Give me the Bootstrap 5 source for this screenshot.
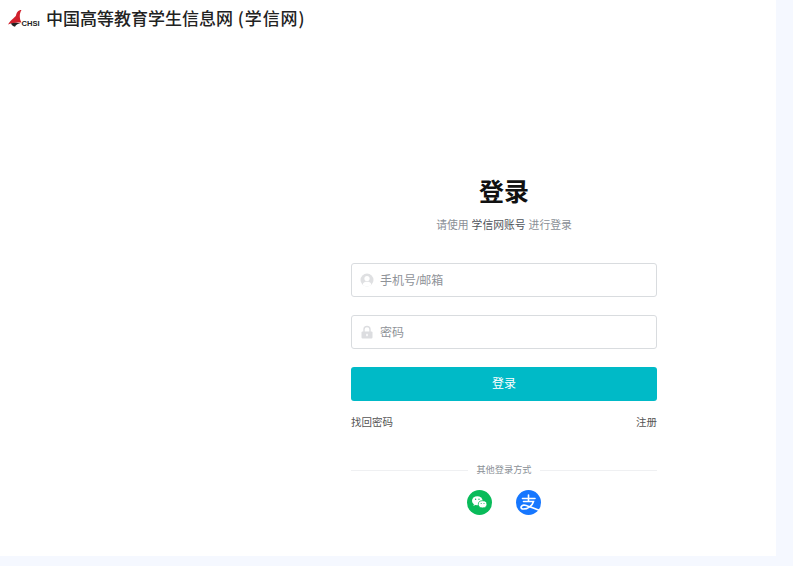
<!DOCTYPE html>
<html lang="zh">
<head>
<meta charset="utf-8">
<title>登录</title>
<link href="https://cdn.jsdelivr.net/npm/bootstrap@5.3.0/dist/css/bootstrap.min.css" rel="stylesheet">
<style>
html,body{height:566px;overflow:hidden}
body{background:#f5f8ff;font-family:"Liberation Sans","Noto Sans CJK SC",sans-serif;color:#333}
.sheet{width:776px;height:556px;background:#fff}
.brand{height:40px;padding:5px 0 0 8px;gap:6px}
.brand-name{font-family:"Noto Sans CJK SC",sans-serif;font-weight:500;font-size:17px;line-height:26px;color:#222;white-space:pre}
.brand-alt{letter-spacing:.9px;margin-left:1px}
.login-box{width:306px;margin:0 0 0 351px;padding-top:135px}
.login-title{font-size:25px;font-weight:700;line-height:34px;color:#111;margin:0}
.login-sub{font-size:10.8px;line-height:16px;color:#8a8f96;margin:8px 0 30px}
.login-sub b{font-weight:400;color:#50555c}
.field{height:34px;border:1px solid #d9dcdf;border-radius:3px;margin-bottom:18px;padding-left:8px;gap:6px}
.field input{border:0;outline:0;padding:1px 0 0;flex:1;min-width:0;font-size:12px;color:#333;background:transparent}
.field input::placeholder{color:#8f9399;opacity:1}
.go-btn{height:34px;background:#00bac7;border:0;border-radius:3px;color:#fff;font-size:12px;padding:0}
.go-btn:hover{background:#00bac7;color:#fff}
.aux{font-size:10.5px;line-height:16px;margin-top:13px}
.aux a{color:#555;text-decoration:none}
.rule-row{margin-top:33px;gap:8px;font-size:9.2px;line-height:14px;color:#8a8f96}
.rule-row i{flex:1;height:1px;background:#eff0f2}
.socials{gap:24px;margin-top:13px}
.socials svg{display:block}
</style>
</head>
<body>
<div class="sheet">
  <div class="brand d-flex align-items-start">
    <svg width="32" height="24" viewBox="0 0 32 24" aria-label="CHSI">
      <path d="M13.500 5C10 5 8.500 7.500 8 10.500C6.500 13 2.500 15 0 19.500C3.500 18 8 17.500 13.500 17.500C11.500 14 11 9 13.500 5Z" fill="#d0202c"/>
      <path d="M3 18.300C6 17.600 10 17.600 12.500 18.300C9.500 18.800 7.800 19.800 7 21.800C5 21.500 3.500 20 3 18.300Z" fill="#222"/>
      <text x="13.500" y="21" font-family="Liberation Sans" font-size="7.600" font-weight="700" fill="#222">CHSI</text>
    </svg>
    <span class="brand-name">中国高等教育学生信息网 <span class="brand-alt">(学信网)</span></span>
  </div>
  <div class="login-box">
    <div class="text-center">
      <h1 class="login-title">登录</h1>
      <p class="login-sub">请使用 <b>学信网账号</b> 进行登录</p>
    </div>
    <form>
      <label class="field d-flex align-items-center">
        <svg width="14" height="14" viewBox="0 0 14 14"><circle cx="7" cy="7" r="6.500" fill="#dfe0e2"/><circle cx="7" cy="5.500" r="2.600" fill="#fff"/><path d="M2.500 11.500C3.500 9.300 5 8.800 7 8.800s3.500.5 4.500 2.700A6 6 0 0 1 2.500 11.500Z" fill="#fff"/></svg>
        <input type="text" placeholder="手机号/邮箱">
      </label>
      <label class="field d-flex align-items-center">
        <svg width="14" height="14" viewBox="0 0 14 14"><path d="M4 7V4.500a3 3 0 0 1 6 0V7" fill="none" stroke="#dcdde0" stroke-width="1.400"/><rect x="1.500" y="6.500" width="11" height="7" rx="1" fill="#dcdde0"/><rect x="6.300" y="8.800" width="1.400" height="2.400" fill="#fff"/></svg>
        <input type="password" placeholder="密码">
      </label>
      <button type="button" class="btn go-btn w-100">登录</button>
      <div class="aux d-flex justify-content-between"><a href="#">找回密码</a><a href="#">注册</a></div>
    </form>
    <div class="rule-row d-flex align-items-center"><i></i><span>其他登录方式</span><i></i></div>
    <div class="socials d-flex justify-content-center">
      <svg width="25" height="25" viewBox="0 0 25 25" aria-label="微信"><circle cx="12.500" cy="12.500" r="12.500" fill="#09bb5a"/><ellipse cx="10.300" cy="10.800" rx="5.300" ry="4.500" fill="#fff"/><path d="M7 14l-.6 2 2.300-1.200Z" fill="#fff"/><ellipse cx="15.600" cy="14.300" rx="4.300" ry="3.600" fill="#fff" stroke="#09bb5a" stroke-width=".8"/><circle cx="8.600" cy="9.300" r=".7" fill="#09bb5a"/><circle cx="12" cy="9.300" r=".7" fill="#09bb5a"/><circle cx="14.200" cy="13.500" r=".55" fill="#09bb5a"/><circle cx="17" cy="13.500" r=".55" fill="#09bb5a"/></svg>
      <svg width="25" height="25" viewBox="0 0 25 25" aria-label="支付宝"><circle cx="12.500" cy="12.500" r="12.500" fill="#1677ff"/><path d="M6.500 8.500H19M12.500 5v6M7.500 11.500H17.500C16.500 15.500 12 19.500 6.500 19C3.500 18 5.500 14.500 9 15.200C12 15.800 17 18 24 20.500" fill="none" stroke="#fff" stroke-width="1.600" stroke-linecap="round"/></svg>
    </div>
  </div>
</div>
</body>
</html>
